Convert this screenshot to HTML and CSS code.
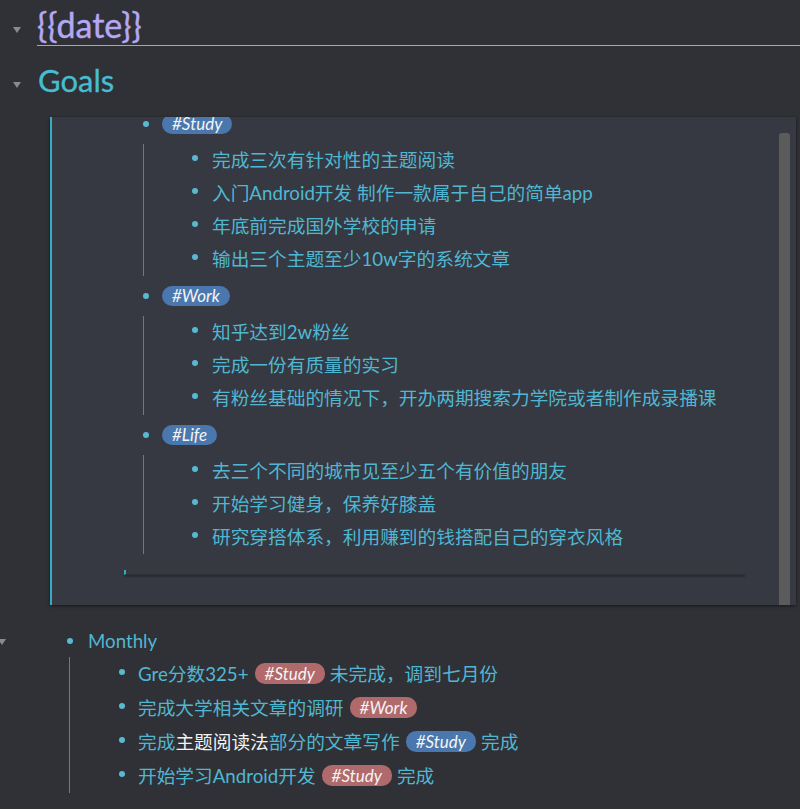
FILE: index.html
```html
<!DOCTYPE html>
<html lang="zh">
<head>
<meta charset="utf-8">
<title>{{date}}</title>
<link rel="stylesheet" href="styles.css">
</head>
<body>
<div class="page">
  <div class="hrow h-date">
    <div class="arrow-col"><span class="arrow"></span></div>
    <div class="title date">{{date}}</div>
  </div>
  <div class="hrow h-goals">
    <div class="arrow-col"><span class="arrow"></span></div>
    <div class="title goals">Goals</div>
  </div>

  <div class="embed">
    <div class="scroll">
      <div class="p1 row-tag"><span class="bul"><i class="dot"></i></span><span class="tag blue">#Study</span></div>
      <div class="p-kids">
        <div class="p2 row"><span class="bul"><i class="dot"></i></span><span class="txt">完成三次有针对性的主题阅读</span></div>
        <div class="p2 row"><span class="bul"><i class="dot"></i></span><span class="txt">入门Android开发 制作一款属于自己的简单app</span></div>
        <div class="p2 row"><span class="bul"><i class="dot"></i></span><span class="txt">年底前完成国外学校的申请</span></div>
        <div class="p2 row"><span class="bul"><i class="dot"></i></span><span class="txt">输出三个主题至少10w字的系统文章</span></div>
      </div>
      <div class="p1 row-tag"><span class="bul"><i class="dot"></i></span><span class="tag blue">#Work</span></div>
      <div class="p-kids">
        <div class="p2 row"><span class="bul"><i class="dot"></i></span><span class="txt">知乎达到2w粉丝</span></div>
        <div class="p2 row"><span class="bul"><i class="dot"></i></span><span class="txt">完成一份有质量的实习</span></div>
        <div class="p2 row"><span class="bul"><i class="dot"></i></span><span class="txt">有粉丝基础的情况下，开办两期搜索力学院或者制作成录播课</span></div>
      </div>
      <div class="p1 row-tag"><span class="bul"><i class="dot"></i></span><span class="tag blue">#Life</span></div>
      <div class="p-kids">
        <div class="p2 row"><span class="bul"><i class="dot"></i></span><span class="txt">去三个不同的城市见至少五个有价值的朋友</span></div>
        <div class="p2 row"><span class="bul"><i class="dot"></i></span><span class="txt">开始学习健身，保养好膝盖</span></div>
        <div class="p2 row"><span class="bul"><i class="dot"></i></span><span class="txt">研究穿搭体系，利用赚到的钱搭配自己的穿衣风格</span></div>
      </div>
      <div class="inner-end"></div>
    </div>
    <div class="scrollbar"></div>
  </div>

  <div class="monthly">
    <div class="m1 row"><span class="arrow m-arrow"></span><span class="bul"><i class="dot"></i></span><span class="txt">Monthly</span></div>
    <div class="m-kids">
      <div class="m2 row"><span class="bul"><i class="dot"></i></span><span class="txt">Gre分数325+<span class="tag red">#Study</span>未完成，调到七月份</span></div>
      <div class="m2 row"><span class="bul"><i class="dot"></i></span><span class="txt">完成大学相关文章的调研<span class="tag red">#Work</span></span></div>
      <div class="m2 row"><span class="bul"><i class="dot"></i></span><span class="txt">完成<span class="ref">主题阅读法</span>部分的文章写作<span class="tag blue">#Study</span>完成</span></div>
      <div class="m2 row"><span class="bul"><i class="dot"></i></span><span class="txt">开始学习Android开发<span class="tag red">#Study</span>完成</span></div>
    </div>
  </div>
</div>
</body>
</html>
```

FILE: styles.css
```css
html, body {
  margin: 0;
  padding: 0;
  background: #303136;
  overflow: hidden;
}

.page {
  width: 800px;
  height: 809px;
  overflow: hidden;
  font-family: Lato, "Noto Sans CJK SC", sans-serif;
  color: #50b7d3;
}

/* headings */
.hrow {
  display: flex;
}

.arrow-col {
  width: 37px;
  flex: none;
}

.arrow {
  display: block;
  width: 0;
  height: 0;
  border-left: 4.5px solid transparent;
  border-right: 4.5px solid transparent;
  border-top: 6px solid #8a8a8c;
}

.h-date .arrow {
  margin: 27px 0 0 13px;
}

.h-goals .arrow {
  margin: 36px 0 0 13px;
}

.title {
  flex: 1;
  box-sizing: border-box;
}

.date {
  height: 46px;
  padding-top: 4px;
  line-height: 41px;
  font-size: 34px;
  color: #b4a7f3;
  border-bottom: 1px solid #7cc67f;
  -webkit-text-stroke: 0.4px #b4a7f3;
}

.goals {
  height: 71px;
  padding-top: 14px;
  line-height: 40px;
  font-size: 31px;
  color: #46bdd1;
  padding-left: 1px;
  -webkit-text-stroke: 0.3px #46bdd1;
}

/* embedded panel */
.embed {
  position: relative;
  margin-left: 50px;
  width: 746px;
  height: 488px;
  box-sizing: border-box;
  background: #363941;
  border-left: 2px solid #36abc6;
  overflow: hidden;
  box-shadow: 0 1px 3px rgba(0, 0, 0, 0.55);
}

.scroll {
  margin-top: -13px;
}

.row, .row-tag {
  display: flex;
  align-items: center;
  box-sizing: border-box;
  font-size: 18.7px;
  white-space: nowrap;
}

.row {
  padding-bottom: 5px;
}

.row-tag {
  height: 40px;
}

.bul {
  width: 16px;
  flex: none;
  display: flex;
  justify-content: center;
}

.dot {
  display: block;
  width: 6px;
  height: 6px;
  border-radius: 50%;
  background: #59b9d1;
}

.p1 {
  padding-left: 86px;
}

.p1 .bul {
  margin-right: 8px;
}

.p-kids {
  margin-left: 91px;
  padding-left: 43px;
  border-left: 1px solid #3b8da2;
}

.p2 {
  height: 33px;
}

.p2 .bul {
  margin-right: 9px;
}

.inner-end {
  margin: 16px 0 0 72px;
  width: 621px;
  height: 5px;
  box-sizing: border-box;
  border-left: 2px solid #36abc6;
  border-bottom: 1px solid #2e3036;
  box-shadow: 0 2px 2px rgba(0, 0, 0, 0.25);
}

.scrollbar {
  position: absolute;
  right: 6px;
  top: 16px;
  bottom: 0;
  width: 11px;
  border-radius: 3px 3px 0 0;
  background: #5b5b5c;
}

/* tags */
.tag {
  display: inline-block;
  height: 20px;
  line-height: 20px;
  padding: 0 10px;
  border-radius: 10px;
  font-size: 17px;
  font-style: italic;
  color: #f4f4f4;
  vertical-align: 1px;
}

.txt .tag {
  margin: 0 5px 0 6px;
  height: 21px;
  line-height: 21px;
}

.blue {
  background: #4a77ad;
}

.red {
  background: #b06a6b;
}

.ref {
  color: #f2f2f2;
}

/* monthly */
.monthly {
  margin-top: 19px;
}

.m1 {
  height: 33px;
  padding-bottom: 0;
  padding-top: 1px;
}

.m-arrow {
  flex: none;
  margin: 1px 56px 0 -2px;
}

.m1 .bul {
  margin-right: 10px;
}

.m-kids {
  margin-left: 69px;
  padding-left: 44px;
  border-left: 1px solid #3b8da2;
}

.m2 {
  height: 34px;
  padding-bottom: 4px;
}

.m2 .bul {
  margin-right: 8px;
}
```
